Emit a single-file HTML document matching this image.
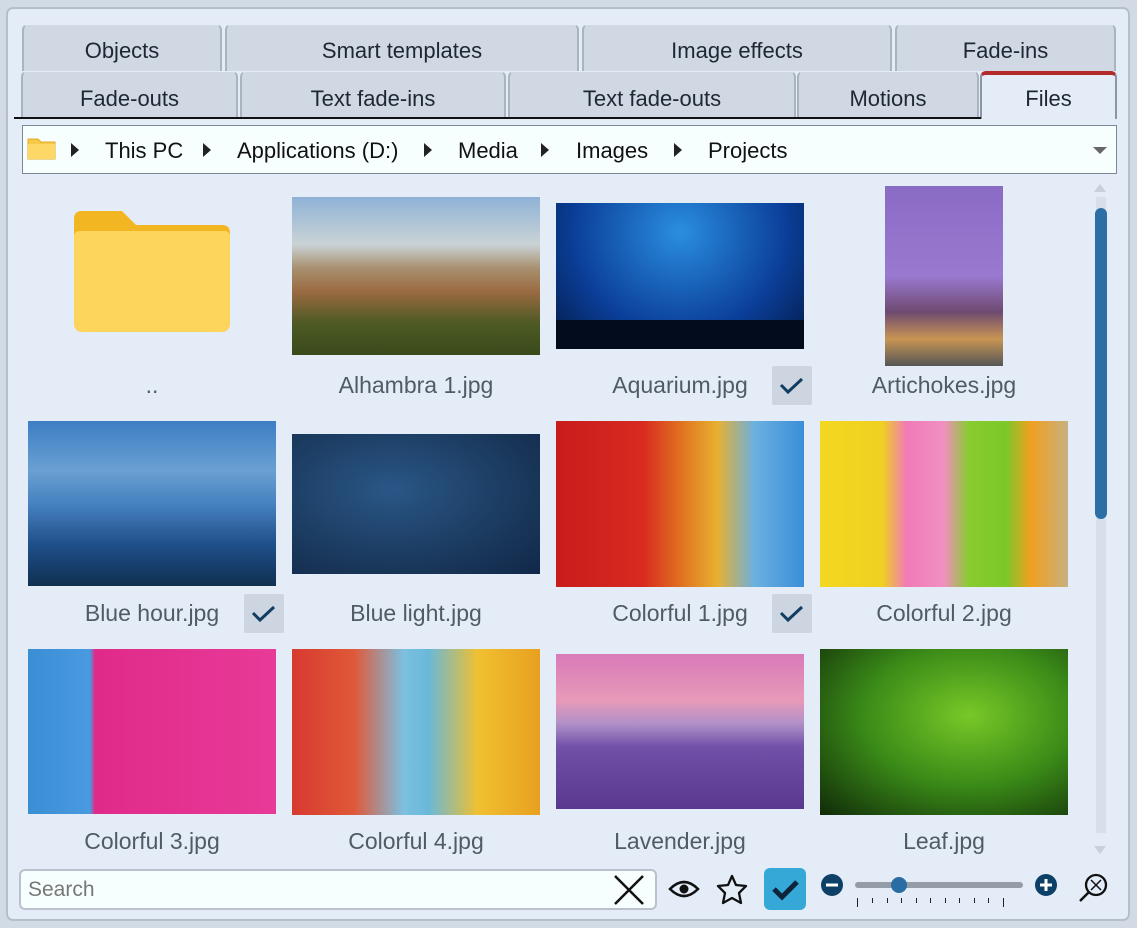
<!DOCTYPE html>
<html><head><meta charset="utf-8"><style>
*{box-sizing:border-box;margin:0;padding:0}
body{width:1137px;height:928px;background:#d2dbe5;font-family:"Liberation Sans",sans-serif;position:relative;overflow:hidden}
.frame{position:absolute;left:6px;top:7px;width:1124px;height:914px;background:#e3ecf7;border:2px solid #b4bfcb;border-radius:7px}
.tab{position:absolute;background:#cfd8e3;border-radius:6px 6px 0 0;color:#1e2733;font-size:22px;text-align:center;line-height:52px;border-left:2px solid #aab4bf;border-right:2px solid #aab4bf;border-top:1px solid #e3ecf7}
.a{position:absolute}
.lbl{position:absolute;width:248px;text-align:center;font-size:23px;color:#505b66}
.chk{position:absolute;width:40px;height:39px;background:#cdd6e0;border-radius:2px}
.bc{position:absolute;top:127px;height:48px;line-height:48px;font-size:22px;color:#111}
.tri{position:absolute;top:143px;width:0;height:0;border-top:7px solid transparent;border-bottom:7px solid transparent;border-left:8px solid #222}
</style></head><body>
<div class="frame"></div>
<div class="tab" style="left:22px;top:24px;width:200px;height:47px">Objects</div>
<div class="tab" style="left:225px;top:24px;width:354px;height:47px">Smart templates</div>
<div class="tab" style="left:582px;top:24px;width:310px;height:47px">Image effects</div>
<div class="tab" style="left:895px;top:24px;width:221px;height:47px">Fade-ins</div>
<div class="tab" style="left:21px;top:71px;width:217px;height:47px;line-height:54px">Fade-outs</div>
<div class="tab" style="left:240px;top:71px;width:266px;height:47px;line-height:54px">Text fade-ins</div>
<div class="tab" style="left:508px;top:71px;width:288px;height:47px;line-height:54px">Text fade-outs</div>
<div class="tab" style="left:797px;top:71px;width:182px;height:47px;line-height:54px">Motions</div>
<div class="tab" style="left:980px;top:71px;width:137px;height:48px;line-height:48px;background:#e3ecf7;border-top:4px solid #b22a2a;border-left-color:#8a96a3;border-right-color:#8a96a3">Files</div>
<div class="a" style="left:14px;top:117px;width:967px;height:2px;background:#111"></div>
<div class="a" style="left:22px;top:125px;width:1095px;height:49px;background:#f7fffe;border:1px solid #7a8897"></div>
<svg class="a" style="left:27px;top:137px" width="29" height="23"><path d="M1 2h10l3 3h14v17H1z" fill="#f7c948" stroke="#e0a82a"/><rect x="1" y="7" width="27" height="15" fill="#fdd866"/></svg>
<div class="tri" style="left:71px"></div><div class="bc" style="left:105px">This PC</div>
<div class="tri" style="left:203px"></div><div class="bc" style="left:237px">Applications (D:)</div>
<div class="tri" style="left:424px"></div><div class="bc" style="left:458px">Media</div>
<div class="tri" style="left:541px"></div><div class="bc" style="left:576px">Images</div>
<div class="tri" style="left:674px"></div><div class="bc" style="left:708px">Projects</div>
<div class="a" style="left:1093px;top:147px;border-left:7px solid transparent;border-right:7px solid transparent;border-top:7px solid #666"></div>

<svg class="a" style="left:72px;top:209px" width="160" height="126"><path d="M2 10 Q2 2 10 2H50l14 14H150q8 0 8 8V114q0 8-8 8H10q-8 0-8-8z" fill="#f3b623"/><path d="M2 28q0-6 6-6H152q6 0 6 6V114q0 9-9 9H11q-9 0-9-9z" fill="#fdd45c"/></svg>
<div class="lbl" style="left:28px;top:372px">..</div>

<div class="a" style="left:292px;top:197px;width:248px;height:158px;background:linear-gradient(#8fb2d6 0%,#c9d3d6 30%,#a89070 45%,#9a6a40 60%,#4d5a25 80%,#3a4a1a 100%)"></div>
<div class="lbl" style="left:292px;top:372px">Alhambra 1.jpg</div>
<div class="a" style="left:556px;top:203px;width:248px;height:146px;background:radial-gradient(ellipse at 50% 20%,#2a8ee0,#0b3f9a 60%,#031a45 100%)"></div>
<div class="a" style="left:556px;top:320px;width:248px;height:29px;background:#020c1c"></div>
<div class="lbl" style="left:556px;top:372px;width:248px">Aquarium.jpg</div>
<div class="chk" style="left:772px;top:366px"></div>
<div class="a" style="left:885px;top:186px;width:118px;height:180px;background:linear-gradient(#8a6bc4 0%,#9a79d0 50%,#6e4a70 70%,#c99554 85%,#555 100%)"></div>
<div class="lbl" style="left:820px;top:372px">Artichokes.jpg</div>

<div class="a" style="left:28px;top:421px;width:248px;height:165px;background:linear-gradient(#3d7ec4 0%,#6aa0d2 30%,#4682c0 50%,#1f4f8a 75%,#10304f 100%)"></div>
<div class="lbl" style="left:28px;top:600px;width:248px">Blue hour.jpg</div>
<div class="chk" style="left:244px;top:594px"></div>
<div class="a" style="left:292px;top:434px;width:248px;height:140px;background:radial-gradient(ellipse at 40% 40%,#2a5687,#183557 70%,#10284a)"></div>
<div class="lbl" style="left:292px;top:600px">Blue light.jpg</div>
<div class="a" style="left:556px;top:421px;width:248px;height:166px;background:linear-gradient(90deg,#c81c1c 0%,#d82a20 35%,#e07020 50%,#e8b030 65%,#6bb0e0 80%,#3a8ed8 100%)"></div>
<div class="lbl" style="left:556px;top:600px;width:248px">Colorful 1.jpg</div>
<div class="chk" style="left:772px;top:594px"></div>
<div class="a" style="left:820px;top:421px;width:248px;height:166px;background:linear-gradient(90deg,#f2d820 0%,#f0d020 25%,#f07ab8 35%,#f090c0 50%,#88cc30 60%,#7cc828 75%,#f0a020 85%,#c8b080 100%)"></div>
<div class="lbl" style="left:820px;top:600px">Colorful 2.jpg</div>

<div class="a" style="left:28px;top:649px;width:248px;height:165px;background:linear-gradient(90deg,#3a8ed4 0%,#4a9ae0 25%,#e02a8a 27%,#e83a98 100%)"></div>
<div class="lbl" style="left:28px;top:828px">Colorful 3.jpg</div>
<div class="a" style="left:292px;top:649px;width:248px;height:166px;background:linear-gradient(90deg,#d83a30 0%,#e05838 25%,#7cc0e0 45%,#6ab8d8 55%,#f0c030 75%,#e8a020 100%)"></div>
<div class="lbl" style="left:292px;top:828px">Colorful 4.jpg</div>
<div class="a" style="left:556px;top:654px;width:248px;height:155px;background:linear-gradient(#d87ab8 0%,#e89ab8 30%,#b090c8 45%,#7050a8 60%,#5a3890 100%)"></div>
<div class="lbl" style="left:556px;top:828px">Lavender.jpg</div>
<div class="a" style="left:820px;top:649px;width:248px;height:166px;background:radial-gradient(ellipse at 60% 40%,#78c828,#3a8a18 50%,#102a08 100%)"></div>
<div class="lbl" style="left:820px;top:828px">Leaf.jpg</div>

<svg class="a" style="left:0;top:0" width="1137" height="928">
<g fill="none" stroke="#123d63" stroke-width="3"><path d="M781 385l7 7 14-13"/><path d="M253 613l7 7 14-13"/><path d="M781 613l7 7 14-13"/></g>
<path d="M1094 192l6-8 6 8z" fill="#c8d0da"/><path d="M1094 846l6 8 6-8z" fill="#c8d0da"/>
<rect x="1096" y="197" width="10" height="636" fill="#d7e0ea"/>
<rect x="1095" y="208" width="12" height="311" rx="6" fill="#2c6ea6"/>
</svg>

<div class="a" style="left:19px;top:869px;width:638px;height:41px;background:#f7fffe;border:2px solid #b9c2cc;border-radius:6px"></div>
<div class="a" style="left:28px;top:878px;font-size:21px;color:#777">Search</div>
<svg class="a" style="left:0;top:0" width="1137" height="928">
<path d="M615 876l28 28M643 876l-28 28" stroke="#111" stroke-width="2.5"/>
<path d="M670 889q14-14 28 0q-14 14-28 0z" fill="none" stroke="#111" stroke-width="2.5"/><circle cx="684" cy="889" r="4.5" fill="#111"/>
<path d="M732 876l4 9 10 1-7 7 2 10-9-5-9 5 2-10-7-7 10-1z" fill="none" stroke="#111" stroke-width="2.3" stroke-linejoin="round"/>
<rect x="764" y="868" width="42" height="42" rx="6" fill="#35a8d8"/>
<path d="M774 889l8 8 15-15" fill="none" stroke="#0e2438" stroke-width="5"/>
<circle cx="832" cy="885" r="11" fill="#0e3f66"/><rect x="826" y="883.5" width="12" height="3" fill="#fff"/>
<rect x="855" y="882" width="168" height="6" rx="3" fill="#949ca8"/>
<circle cx="899" cy="885" r="8" fill="#2a6ca4"/>
<g stroke="#222" stroke-width="1"><path d="M857.5 898v9M872.5 898v5M887.5 898v5M901.5 898v5M916.5 898v5M930.5 898v5M945.5 898v5M959.5 898v5M974.5 898v5M988.5 898v5M1003.5 898v9"/></g>
<circle cx="1046" cy="885" r="11" fill="#0e3f66"/><rect x="1040" y="883.5" width="12" height="3" fill="#fff"/><rect x="1044.5" y="879" width="3" height="12" fill="#fff"/>
<circle cx="1096" cy="885" r="10" fill="none" stroke="#111" stroke-width="2.3"/><path d="M1089 892l-9 9" stroke="#111" stroke-width="2.5"/>
<path d="M1091 880l10 10M1101 880l-10 10" stroke="#111" stroke-width="1.5"/>
</svg>
</body></html>
